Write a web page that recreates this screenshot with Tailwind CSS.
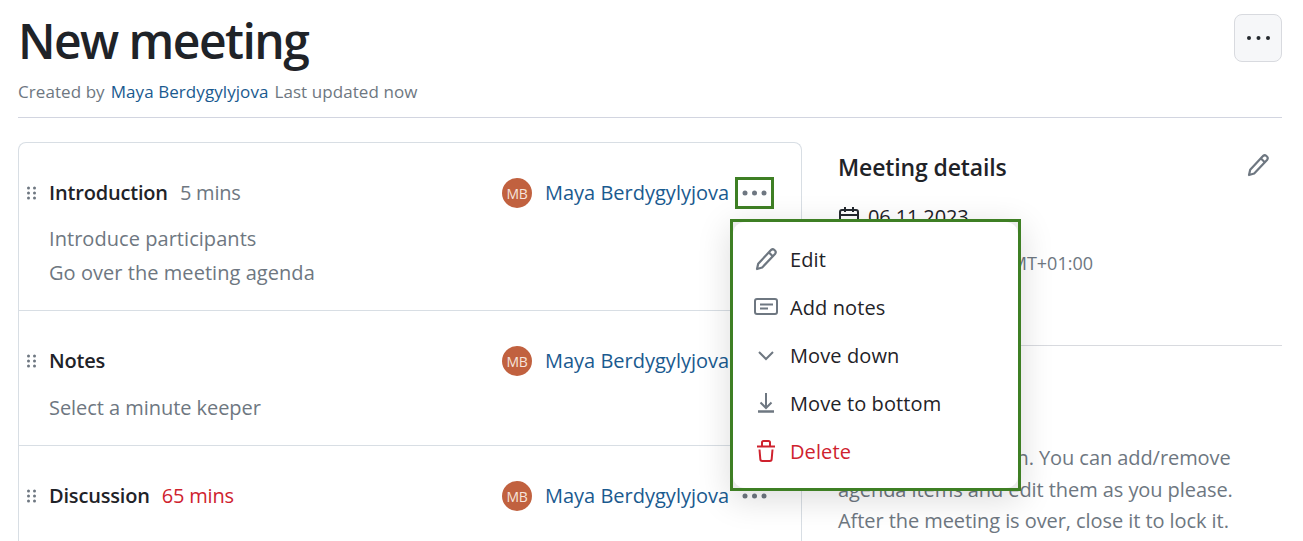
<!DOCTYPE html>
<html lang="en"><head><meta charset="utf-8">
<script src="https://cdn.jsdelivr.net/npm/@tailwindcss/browser@4"></script>
<title>New meeting</title></head>
<body class="bg-white overflow-hidden h-[541px] relative font-['Open_Sans','Noto_Sans',sans-serif] text-[#242424]">
<div class="pl-[18px] pr-[21px]">
  <header class="h-[118px] border-b border-[#d2d5e0] flex justify-between">
    <div>
      <h1 class="pt-[10px] text-[48px] leading-[62px] font-semibold tracking-[-1.57px] text-[#1f2328]">New meeting</h1>
      <p class="mt-[8px] text-[17px] leading-[24px] tracking-[0.07px] text-[#6e7781] flex gap-[6px]"><span>Created by</span><span class="text-[#1a5a8f]">Maya Berdygylyjova</span><span>Last updated now</span></p>
    </div>
    <button class="mt-[14px] w-[48px] h-[48px] rounded-[8px] border border-[#d8dadf] bg-[#f6f7f9] flex items-center justify-center">
      <svg width="24" height="6" viewBox="0 0 24 6" fill="#24292f"><circle cx="3" cy="3" r="2"/><circle cx="12.500" cy="3" r="2"/><circle cx="22" cy="3" r="2"/></svg>
    </button>
  </header>
  <main class="mt-[24px] flex">
    <section class="w-[784px] border border-b-0 border-[#d8dee4] rounded-t-[8px]">
      <article class="h-[168px] border-b border-[#d8dee4] pt-[32px] pl-[7px] pr-[27px]">
        <div class="flex items-center h-[36px]">
          <svg class="w-[12px] h-[14px]" viewBox="0 0 12 14" fill="#6e7781"><circle cx="2.500" cy="2" r="1.500"/><circle cx="8.500" cy="2" r="1.500"/><circle cx="2.500" cy="7" r="1.500"/><circle cx="8.500" cy="7" r="1.500"/><circle cx="2.500" cy="12" r="1.500"/><circle cx="8.500" cy="12" r="1.500"/></svg>
          <span class="ml-[11px] text-[20px] font-semibold tracking-[-0.18px] text-[#1f2328]">Introduction</span>
          <span class="ml-[12px] text-[20px] tracking-[-0.2px] text-[#6e7781]">5 mins</span>
          <span class="ml-auto w-[30px] h-[30px] rounded-full bg-[#c1613f] text-[#f7e4dc] text-[14px] tracking-[-0.4px] flex items-center justify-center">MB</span>
          <span class="ml-[13px] w-[190px] text-[20px] text-[#1a5a8f] whitespace-nowrap">Maya Berdygylyjova</span>
          <span class="w-[39px] h-[32px] border-[3px] border-[#3e7f24] flex items-center justify-center">
            <svg width="25" height="6" viewBox="0 0 25 6" fill="#6e7781"><circle cx="3" cy="3" r="2.500"/><circle cx="12.500" cy="3" r="2.500"/><circle cx="22" cy="3" r="2.500"/></svg>
          </span>
        </div>
        <div class="pl-[23px] mt-[11px] text-[20px] leading-[34px] tracking-[0.05px] text-[#6e7781]"><p>Introduce participants</p><p>Go over the meeting agenda</p></div>
      </article>
      <article class="h-[135px] border-b border-[#d8dee4] pt-[32px] pl-[7px] pr-[27px]">
        <div class="flex items-center h-[36px]">
          <svg class="w-[12px] h-[14px]" viewBox="0 0 12 14" fill="#6e7781"><circle cx="2.500" cy="2" r="1.500"/><circle cx="8.500" cy="2" r="1.500"/><circle cx="2.500" cy="7" r="1.500"/><circle cx="8.500" cy="7" r="1.500"/><circle cx="2.500" cy="12" r="1.500"/><circle cx="8.500" cy="12" r="1.500"/></svg>
          <span class="ml-[11px] text-[20px] font-semibold tracking-[-0.18px] text-[#1f2328]">Notes</span>
          <span class="ml-auto w-[30px] h-[30px] rounded-full bg-[#c1613f] text-[#f7e4dc] text-[14px] tracking-[-0.4px] flex items-center justify-center">MB</span>
          <span class="ml-[13px] w-[190px] text-[20px] text-[#1a5a8f] whitespace-nowrap">Maya Berdygylyjova</span>
          <span class="w-[39px] h-[32px]"></span>
        </div>
        <p class="pl-[23px] mt-[12px] text-[20px] leading-[34px] tracking-[-0.05px] text-[#6e7781]">Select a minute keeper</p>
      </article>
      <article class="h-[96px] border-b border-[#d8dee4] pt-[32px] pl-[7px] pr-[27px]">
        <div class="flex items-center h-[36px]">
          <svg class="w-[12px] h-[14px]" viewBox="0 0 12 14" fill="#6e7781"><circle cx="2.500" cy="2" r="1.500"/><circle cx="8.500" cy="2" r="1.500"/><circle cx="2.500" cy="7" r="1.500"/><circle cx="8.500" cy="7" r="1.500"/><circle cx="2.500" cy="12" r="1.500"/><circle cx="8.500" cy="12" r="1.500"/></svg>
          <span class="ml-[11px] text-[20px] font-semibold tracking-[-0.18px] text-[#1f2328]">Discussion</span>
          <span class="ml-[12px] text-[20px] tracking-[-0.2px] text-[#cf222e]">65 mins</span>
          <span class="ml-auto w-[30px] h-[30px] rounded-full bg-[#c1613f] text-[#f7e4dc] text-[14px] tracking-[-0.4px] flex items-center justify-center">MB</span>
          <span class="ml-[13px] w-[190px] text-[20px] text-[#1a5a8f] whitespace-nowrap">Maya Berdygylyjova</span>
          <span class="w-[39px] h-[32px] flex items-center justify-center">
            <svg width="25" height="6" viewBox="0 0 25 6" fill="#6e7781"><circle cx="3" cy="3" r="2.500"/><circle cx="12.500" cy="3" r="2.500"/><circle cx="22" cy="3" r="2.500"/></svg>
          </span>
        </div>
      </article>
    </section>
    <aside class="ml-[36px] flex-1">
      <div class="h-[204px] border-b border-[#d8dadf]">
        <div class="flex items-center justify-between pt-[7px] pr-[12px]">
          <h2 class="text-[23px] leading-[36px] font-semibold tracking-[-0.13px] text-[#1f2328]">Meeting details</h2>
          <svg class="-mt-[2px]" width="24" height="24" viewBox="0 0 24 24" fill="none" stroke="#6e7781" stroke-width="2.200" stroke-linejoin="round"><path d="M3 21l1.200-5.200L16.500 2.500a2.600 2.600 0 0 1 4.500 3.500L8.200 19.500z"/><path d="M15 4.500l4 4"/></svg>
        </div>
        <p class="mt-[19px] flex items-center gap-[8px] text-[20px] leading-[26px] tracking-[-0.15px] text-[#1f2328]">
          <svg width="22" height="22" viewBox="0 0 22 22" fill="none" stroke="#24292f" stroke-width="2"><rect x="2" y="4" width="18" height="16" rx="2"/><path d="M2 9h18M7 1v5M15 1v5"/></svg>06.11.2023
        </p>
        <p class="mt-[20px] pl-[48px] text-[18px] leading-[26px] text-[#6e7781]">11:00 - 12:15 GMT+01:00</p>
      </div>
      <p class="mt-[96px] pr-[40px] text-[20px] leading-[31.500px] tracking-[-0.07px] text-[#6e7781]">This meeting is open. You can add/remove agenda items and edit them as you please. After the meeting is over, close it to lock it.</p>
    </aside>
  </main>
</div>
<div class="absolute left-[730px] top-[219px] w-[291px] h-[272px] border-[3px] border-[#3e7f24] bg-[#ececec] shadow-[0_8px_32px_rgba(0,0,0,0.14)]">
  <div class="h-full rounded-[12px] bg-white pt-[14px] pl-[21px]">
    <ul class="text-[20px] tracking-[0.1px] text-[#1f2328]">
      <li class="h-[48px] flex items-center"><span class="w-[36px]"><svg width="24" height="24" viewBox="0 0 24 24" fill="none" stroke="#6e7781" stroke-width="2.200" stroke-linejoin="round"><path d="M3 21l1.200-5.200L16.500 2.500a2.600 2.600 0 0 1 4.500 3.500L8.200 19.500z"/><path d="M15 4.500l4 4"/></svg></span>Edit</li>
      <li class="h-[48px] flex items-center"><span class="w-[36px]"><svg width="24" height="24" viewBox="0 0 24 24" fill="none" stroke="#6e7781" stroke-width="2"><rect x="1" y="3" width="22" height="15" rx="2"/><path d="M6 8.500h13M6 12.500h8"/></svg></span>Add notes</li>
      <li class="h-[48px] flex items-center"><span class="w-[36px]"><svg width="24" height="24" viewBox="0 0 24 24" fill="none" stroke="#6e7781" stroke-width="2"><path d="M5 8l7 7 7-7"/></svg></span>Move down</li>
      <li class="h-[48px] flex items-center"><span class="w-[36px]"><svg width="24" height="24" viewBox="0 0 24 24" fill="none" stroke="#6e7781" stroke-width="2"><path d="M12 1v15M6.500 10.500l5.500 5.500 5.500-5.500"/><path d="M4 19.500h16" stroke-width="2.500"/></svg></span>Move to bottom</li>
      <li class="h-[48px] flex items-center text-[#cf222e]"><span class="w-[36px]"><svg width="24" height="24" viewBox="0 0 24 24" fill="none" stroke="#cf222e" stroke-width="2"><path d="M3 6.500h18M8 6V2.500A1.500 1.500 0 0 1 9.500 1h5A1.500 1.500 0 0 1 16 2.500V6M5.500 9.500l.8 9.500a2 2 0 0 0 2 2h7.400a2 2 0 0 0 2-2l.8-9.500"/></svg></span>Delete</li>
    </ul>
  </div>
</div>
</body></html>
